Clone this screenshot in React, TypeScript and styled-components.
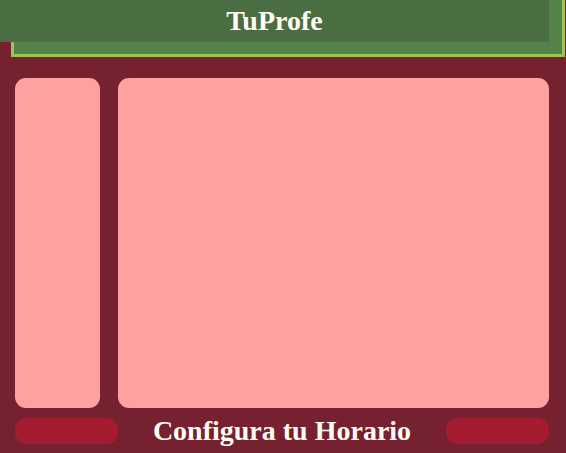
import React from 'react'
import styled, { createGlobalStyle } from 'styled-components'

const GlobalStyle = createGlobalStyle`
    html, body {
        margin: 0;
        padding: 0;
        background: #762130;
    }
`

const Page = styled.div`
    width: 566px;
    height: 453px;
    overflow: hidden;
    background: #762130;

    display: flex;
    flex-flow: column nowrap;

    font-family: "Liberation Serif", "DejaVu Serif", serif;
    color: #fffdf4;
`

const Header = styled.header`
    margin: 0 1px 0 11px;
    padding-bottom: 12px;
    background: #548249;
    border: 3px solid #a0c252;
    border-top: 0;
`

const TitleBar = styled.h1`
    margin: 0 13px 0 -14px;
    height: 42px;

    display: flex;
    justify-content: center;
    align-items: center;

    background: #4a6d41;
    font-size: 28px;
    font-weight: bold;
`

const Main = styled.main`
    display: flex;
    gap: 18px;
    padding: 21px 17px 0 15px;
`

interface PanelProps {
    wide?: boolean
}

const Panel = styled.section<PanelProps>`
    height: 330px;
    border-radius: 11px;
    background: #ffa1a1;
    ${({ wide }) => wide ? 'flex: 1;' : 'width: 85px;'}
`

const Footer = styled.footer`
    display: flex;
    justify-content: space-between;
    align-items: center;
    padding: 10px 17px 0 15px;
`

const Pill = styled.button`
    width: 103px;
    height: 26px;
    border: 0;
    border-radius: 12px;
    background: #a51c30;
`

const Caption = styled.span`
    font-size: 28px;
    font-weight: bold;
    line-height: 26px;
`

export default function App() {
    return (
        <Page>
            <GlobalStyle />
            <Header>
                <TitleBar>TuProfe</TitleBar>
            </Header>
            <Main>
                <Panel />
                <Panel wide />
            </Main>
            <Footer>
                <Pill />
                <Caption>Configura tu Horario</Caption>
                <Pill />
            </Footer>
        </Page>
    )
}
